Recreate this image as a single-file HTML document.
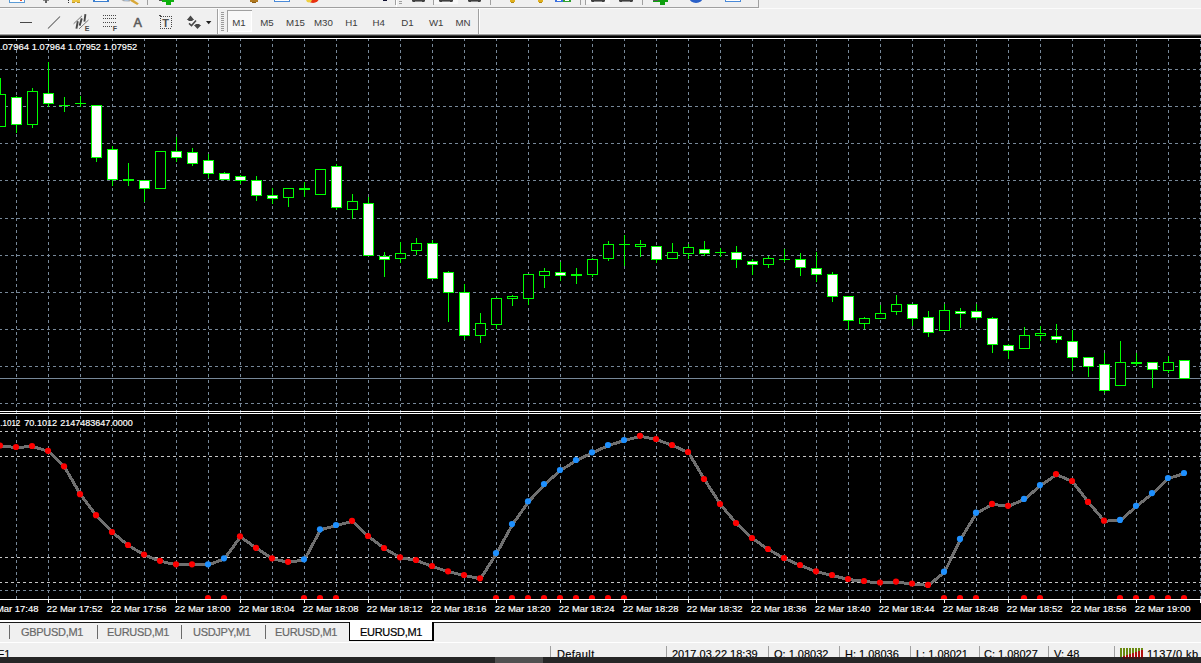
<!DOCTYPE html>
<html><head><meta charset="utf-8"><title>EURUSD,M1</title>
<style>
html,body{margin:0;padding:0;background:#f0f0f0;overflow:hidden}
body{width:1201px;height:663px;position:relative;font-family:"Liberation Sans",sans-serif}
.abs{position:absolute}
.tab{position:absolute;top:626px;font-size:11px;line-height:13px;color:#686868;letter-spacing:-0.3px;white-space:nowrap;-webkit-text-stroke:0.2px}
.sep{position:absolute;top:625px;width:1px;height:14px;background:#6a6a6a}
.st{position:absolute;top:648px;font-size:11px;line-height:13px;color:#000;letter-spacing:0px;white-space:nowrap;-webkit-text-stroke:0.15px}
.ss{position:absolute;top:646px;width:1px;height:11px;background:#a0a0a0}
</style></head><body>
<svg width="1201" height="36" viewBox="0 0 1201 36" style="position:absolute;left:0;top:0">
<defs><linearGradient id="tbg" x1="0" y1="0" x2="0" y2="1"><stop offset="0" stop-color="#e8e8e8"/><stop offset="0.5" stop-color="#8a8a8a"/><stop offset="1" stop-color="#000"/></linearGradient></defs>
<rect x="0" y="0" width="1201" height="36" fill="#f0f0f0"/>
<rect x="0" y="33" width="1201" height="1" fill="#f7f7f7"/><rect x="0" y="34" width="1201" height="1" fill="#a2a2a2"/><rect x="0" y="35" width="1201" height="1" fill="#3a3a3a"/>
<g shape-rendering="crispEdges">
<rect x="0" y="7" width="759" height="1" fill="#a0a0a0"/>
<rect x="0" y="8" width="1201" height="1" fill="#fbfbfb"/>
<rect x="758" y="0" width="1" height="8" fill="#a0a0a0"/>
<rect x="147" y="0" width="1" height="5" fill="#a0a0a0"/>
<rect x="395" y="0" width="1" height="5" fill="#a0a0a0"/>
<rect x="433" y="0" width="1" height="5" fill="#a0a0a0"/>
<rect x="490" y="0" width="1" height="5" fill="#a0a0a0"/>
<rect x="580" y="0" width="1" height="5" fill="#a0a0a0"/>
<rect x="642" y="0" width="1" height="5" fill="#a0a0a0"/>
<rect x="396" y="0" width="1" height="7" fill="#fff"/>
<rect x="399" y="1" width="3" height="1" fill="#a0a0a0"/><rect x="399" y="3" width="3" height="1" fill="#a0a0a0"/>
<rect x="434" y="0" width="24" height="4" fill="#f8f8f8"/>
<rect x="585" y="0" width="25" height="4" fill="#f8f8f8"/><rect x="585" y="0" width="1" height="5" fill="#a0a0a0"/>
<rect x="412" y="0" width="13" height="1" fill="#404040"/><rect x="412" y="1" width="13" height="1" fill="#8a8a8a"/>
<rect x="413" y="1" width="2" height="1" fill="#404040"/><rect x="422" y="1" width="2" height="1" fill="#404040"/>
<rect x="439" y="0" width="14" height="1" fill="#404040"/><rect x="439" y="1" width="14" height="1" fill="#8a8a8a"/>
<rect x="440" y="1" width="2" height="1" fill="#404040"/><rect x="450" y="1" width="2" height="1" fill="#404040"/>
<rect x="468" y="0" width="13" height="1" fill="#404040"/><rect x="468" y="1" width="13" height="1" fill="#8a8a8a"/>
<rect x="469" y="1" width="2" height="1" fill="#404040"/><rect x="478" y="1" width="2" height="1" fill="#404040"/>
<rect x="591" y="0" width="14" height="1" fill="#404040"/><rect x="591" y="1" width="14" height="1" fill="#8a8a8a"/>
<rect x="592" y="1" width="2" height="1" fill="#404040"/><rect x="602" y="1" width="2" height="1" fill="#404040"/>
<rect x="619" y="0" width="14" height="1" fill="#404040"/><rect x="619" y="1" width="14" height="1" fill="#8a8a8a"/>
<rect x="620" y="1" width="2" height="1" fill="#404040"/><rect x="630" y="1" width="2" height="1" fill="#404040"/>
<rect x="9" y="0" width="16" height="3" fill="#5b9bd5"/><rect x="10" y="0" width="14" height="2" fill="#fff"/><rect x="20" y="0" width="2" height="1" fill="#e8502a"/>
<rect x="43" y="0" width="6" height="1" fill="#8a8a8a"/><rect x="45" y="0" width="2" height="3" fill="#606060"/>
<rect x="68" y="0" width="1" height="1" fill="#303030"/><rect x="68" y="2" width="1" height="1" fill="#303030"/>
<rect x="72" y="0" width="8" height="2" fill="#ecc440"/><rect x="72" y="2" width="3" height="1" fill="#c09828"/><rect x="77" y="2" width="3" height="1" fill="#c09828"/>
<rect x="93" y="0" width="16" height="2" fill="#3b7fd0"/><rect x="95" y="0" width="12" height="1" fill="#fff"/>
<rect x="159" y="0" width="4" height="1" fill="#555"/><rect x="162" y="0" width="12" height="2" fill="#10b010"/><rect x="166" y="0" width="5" height="5" fill="#0cb00c"/>
<rect x="250" y="0" width="8" height="2" fill="#b07820"/><rect x="252" y="2" width="4" height="1" fill="#8a5a10"/>
<rect x="274" y="0" width="16" height="2" fill="#4a8ad8"/><rect x="275" y="0" width="14" height="1" fill="#fff"/>
<rect x="383" y="0" width="4" height="1" fill="#101030"/>
<rect x="510" y="0" width="5" height="2" fill="#e0b020"/><rect x="511" y="2" width="3" height="1" fill="#b08810"/>
<rect x="538" y="0" width="5" height="2" fill="#e0b020"/><rect x="539" y="2" width="3" height="1" fill="#b08810"/>
<rect x="555" y="0" width="8" height="2" fill="#3a70e0"/><rect x="557" y="0" width="4" height="1" fill="#fff"/>
<rect x="563" y="0" width="8" height="2" fill="#30a030"/><rect x="565" y="0" width="4" height="1" fill="#fff"/>
<rect x="653" y="0" width="15" height="2" fill="#10a010"/><rect x="660" y="0" width="5" height="5" fill="#10a010"/><rect x="653" y="0" width="5" height="1" fill="#555"/>
<rect x="725" y="0" width="16" height="2" fill="#4a8ad8"/><rect x="726" y="0" width="14" height="1" fill="#fff"/>
</g>
<path d="M121.5 0 L131 0 L129.5 1.4 L123.5 1.2 Z" fill="#a8a8a8"/><path d="M124 0 L129 0 L128 0.8 L125 0.8 Z" fill="#a8c8ee"/><path d="M130.2 0 L133.6 0 L138.8 3.4 L137.2 5 L130.8 1.2 Z" fill="#d8a838"/>
<ellipse cx="313" cy="-2" rx="6" ry="5" fill="#e83010"/><ellipse cx="309" cy="-1" rx="3" ry="3.5" fill="#f0d040"/>
<ellipse cx="696" cy="-3" rx="7" ry="6" fill="#2a60c8"/>
<g shape-rendering="crispEdges">
<rect x="20" y="22" width="12" height="1" fill="#484848"/>
<rect x="217" y="9" width="1" height="25" fill="#a0a0a0"/><rect x="218" y="9" width="1" height="25" fill="#fff"/>
<rect x="221" y="12" width="3" height="1" fill="#9a9a9a"/>
<rect x="221" y="14" width="3" height="1" fill="#9a9a9a"/>
<rect x="221" y="16" width="3" height="1" fill="#9a9a9a"/>
<rect x="221" y="18" width="3" height="1" fill="#9a9a9a"/>
<rect x="221" y="20" width="3" height="1" fill="#9a9a9a"/>
<rect x="221" y="22" width="3" height="1" fill="#9a9a9a"/>
<rect x="221" y="24" width="3" height="1" fill="#9a9a9a"/>
<rect x="221" y="26" width="3" height="1" fill="#9a9a9a"/>
<rect x="221" y="28" width="3" height="1" fill="#9a9a9a"/>
<rect x="221" y="30" width="3" height="1" fill="#9a9a9a"/>
<rect x="227" y="10" width="25" height="22" fill="#f8f8f8"/>
<rect x="227" y="10" width="25" height="1" fill="#a0a0a0"/><rect x="227" y="10" width="1" height="22" fill="#a0a0a0"/>
<rect x="228" y="31" width="24" height="1" fill="#fff"/><rect x="251" y="11" width="1" height="21" fill="#fff"/>
<rect x="478" y="9" width="1" height="25" fill="#a0a0a0"/><rect x="479" y="9" width="1" height="25" fill="#fff"/>
<rect x="103" y="15" width="1" height="1" fill="#484848"/>
<rect x="105" y="15" width="1" height="1" fill="#484848"/>
<rect x="107" y="15" width="1" height="1" fill="#484848"/>
<rect x="109" y="15" width="1" height="1" fill="#484848"/>
<rect x="111" y="15" width="1" height="1" fill="#484848"/>
<rect x="113" y="15" width="1" height="1" fill="#484848"/>
<rect x="115" y="15" width="1" height="1" fill="#484848"/>
<rect x="103" y="18" width="1" height="1" fill="#484848"/>
<rect x="105" y="18" width="1" height="1" fill="#484848"/>
<rect x="107" y="18" width="1" height="1" fill="#484848"/>
<rect x="109" y="18" width="1" height="1" fill="#484848"/>
<rect x="111" y="18" width="1" height="1" fill="#484848"/>
<rect x="113" y="18" width="1" height="1" fill="#484848"/>
<rect x="115" y="18" width="1" height="1" fill="#484848"/>
<rect x="103" y="22" width="1" height="1" fill="#484848"/>
<rect x="105" y="22" width="1" height="1" fill="#484848"/>
<rect x="107" y="22" width="1" height="1" fill="#484848"/>
<rect x="109" y="22" width="1" height="1" fill="#484848"/>
<rect x="111" y="22" width="1" height="1" fill="#484848"/>
<rect x="113" y="22" width="1" height="1" fill="#484848"/>
<rect x="115" y="22" width="1" height="1" fill="#484848"/>
<rect x="103" y="26" width="1" height="1" fill="#484848"/>
<rect x="105" y="26" width="1" height="1" fill="#484848"/>
<rect x="107" y="26" width="1" height="1" fill="#484848"/>
<rect x="109" y="26" width="1" height="1" fill="#484848"/>
<rect x="111" y="26" width="1" height="1" fill="#484848"/>
<rect x="163" y="16" width="1" height="1" fill="#484848"/>
<rect x="165" y="16" width="1" height="1" fill="#484848"/>
<rect x="167" y="16" width="1" height="1" fill="#484848"/>
<rect x="169" y="16" width="1" height="1" fill="#484848"/>
<rect x="171" y="16" width="1" height="1" fill="#484848"/>
<rect x="160" y="28" width="1" height="1" fill="#484848"/>
<rect x="162" y="28" width="1" height="1" fill="#484848"/>
<rect x="164" y="28" width="1" height="1" fill="#484848"/>
<rect x="166" y="28" width="1" height="1" fill="#484848"/>
<rect x="168" y="28" width="1" height="1" fill="#484848"/>
<rect x="170" y="28" width="1" height="1" fill="#484848"/>
<rect x="160" y="18" width="1" height="1" fill="#484848"/>
<rect x="160" y="20" width="1" height="1" fill="#484848"/>
<rect x="160" y="22" width="1" height="1" fill="#484848"/>
<rect x="160" y="24" width="1" height="1" fill="#484848"/>
<rect x="160" y="26" width="1" height="1" fill="#484848"/>
<rect x="160" y="28" width="1" height="1" fill="#484848"/>
<rect x="171" y="16" width="1" height="1" fill="#484848"/>
<rect x="171" y="18" width="1" height="1" fill="#484848"/>
<rect x="171" y="20" width="1" height="1" fill="#484848"/>
<rect x="171" y="22" width="1" height="1" fill="#484848"/>
<rect x="171" y="24" width="1" height="1" fill="#484848"/>
<rect x="171" y="26" width="1" height="1" fill="#484848"/>
<rect x="159" y="15" width="2" height="1" fill="#484848"/><rect x="160" y="16" width="2" height="1" fill="#484848"/>
</g>
<line x1="48" y1="28.5" x2="60" y2="16.5" stroke="#5c5c5c" stroke-width="1.05"/>
<g stroke="#6a6a6a" stroke-width="0.9" fill="none">
<line x1="73.6" y1="23.8" x2="82" y2="15.8"/><line x1="79" y1="28.9" x2="88.5" y2="20"/>
</g>
<g stroke="#484848" stroke-width="1.9" fill="none">
<line x1="76.4" y1="28.6" x2="77.8" y2="21.2"/><line x1="79.6" y1="25.6" x2="81.8" y2="18.4"/><line x1="84.4" y1="21.6" x2="85.4" y2="14.2"/>
</g>
<path d="M190.5 15.6 L194.2 20 L192.6 20 L192.6 21 L188.4 21 L188.4 20 L186.8 20 Z" fill="#484848"/>
<path d="M197.5 29.1 L201.2 25 L199.6 25 L199.6 24 L195.4 24 L195.4 25 L193.8 25 Z" fill="#484848"/>
<path d="M189 23.4 L191.5 25.6 L196 20.4" stroke="#484848" stroke-width="1.5" fill="none"/>
<path d="M206 21 L211.4 21 L208.7 24.3 Z" fill="#202020"/>
<g font-family="Liberation Sans, sans-serif">
<text x="84.8" y="31" font-size="7" font-weight="bold" fill="#484848">E</text>
<text x="112.8" y="31" font-size="7" font-weight="bold" fill="#484848">F</text>
<text x="133.4" y="27" font-size="12.6" fill="#5a5a5a" stroke="#5a5a5a" stroke-width="0.55">A</text>
<text x="162.2" y="27" font-size="11" font-weight="bold" fill="#505050">T</text>
<g font-size="9.7" fill="#3c3c3c" text-anchor="middle">
<text x="238.9" y="26">M1</text>
<text x="266.9" y="26">M5</text>
<text x="295.5" y="26">M15</text>
<text x="323.4" y="26">M30</text>
<text x="351.4" y="26">H1</text>
<text x="378.8" y="26">H4</text>
<text x="407.5" y="26">D1</text>
<text x="436.2" y="26">W1</text>
<text x="463" y="26">MN</text>
</g></g>
</svg>
<svg id="chart" width="1201" height="584" viewBox="0 36 1201 584" style="position:absolute;left:0;top:36px">
<rect x="0" y="36" width="1201" height="584" fill="#000"/>
<g shape-rendering="crispEdges">
<line x1="16.5" y1="38" x2="16.5" y2="599" stroke="#778899" stroke-width="1" stroke-dasharray="3 3"/>
<line x1="48.5" y1="38" x2="48.5" y2="599" stroke="#778899" stroke-width="1" stroke-dasharray="3 3"/>
<line x1="80.5" y1="38" x2="80.5" y2="599" stroke="#778899" stroke-width="1" stroke-dasharray="3 3"/>
<line x1="112.5" y1="38" x2="112.5" y2="599" stroke="#778899" stroke-width="1" stroke-dasharray="3 3"/>
<line x1="144.5" y1="38" x2="144.5" y2="599" stroke="#778899" stroke-width="1" stroke-dasharray="3 3"/>
<line x1="176.5" y1="38" x2="176.5" y2="599" stroke="#778899" stroke-width="1" stroke-dasharray="3 3"/>
<line x1="208.5" y1="38" x2="208.5" y2="599" stroke="#778899" stroke-width="1" stroke-dasharray="3 3"/>
<line x1="240.5" y1="38" x2="240.5" y2="599" stroke="#778899" stroke-width="1" stroke-dasharray="3 3"/>
<line x1="272.5" y1="38" x2="272.5" y2="599" stroke="#778899" stroke-width="1" stroke-dasharray="3 3"/>
<line x1="304.5" y1="38" x2="304.5" y2="599" stroke="#778899" stroke-width="1" stroke-dasharray="3 3"/>
<line x1="336.5" y1="38" x2="336.5" y2="599" stroke="#778899" stroke-width="1" stroke-dasharray="3 3"/>
<line x1="368.5" y1="38" x2="368.5" y2="599" stroke="#778899" stroke-width="1" stroke-dasharray="3 3"/>
<line x1="400.5" y1="38" x2="400.5" y2="599" stroke="#778899" stroke-width="1" stroke-dasharray="3 3"/>
<line x1="432.5" y1="38" x2="432.5" y2="599" stroke="#778899" stroke-width="1" stroke-dasharray="3 3"/>
<line x1="464.5" y1="38" x2="464.5" y2="599" stroke="#778899" stroke-width="1" stroke-dasharray="3 3"/>
<line x1="496.5" y1="38" x2="496.5" y2="599" stroke="#778899" stroke-width="1" stroke-dasharray="3 3"/>
<line x1="528.5" y1="38" x2="528.5" y2="599" stroke="#778899" stroke-width="1" stroke-dasharray="3 3"/>
<line x1="560.5" y1="38" x2="560.5" y2="599" stroke="#778899" stroke-width="1" stroke-dasharray="3 3"/>
<line x1="592.5" y1="38" x2="592.5" y2="599" stroke="#778899" stroke-width="1" stroke-dasharray="3 3"/>
<line x1="624.5" y1="38" x2="624.5" y2="599" stroke="#778899" stroke-width="1" stroke-dasharray="3 3"/>
<line x1="656.5" y1="38" x2="656.5" y2="599" stroke="#778899" stroke-width="1" stroke-dasharray="3 3"/>
<line x1="688.5" y1="38" x2="688.5" y2="599" stroke="#778899" stroke-width="1" stroke-dasharray="3 3"/>
<line x1="720.5" y1="38" x2="720.5" y2="599" stroke="#778899" stroke-width="1" stroke-dasharray="3 3"/>
<line x1="752.5" y1="38" x2="752.5" y2="599" stroke="#778899" stroke-width="1" stroke-dasharray="3 3"/>
<line x1="784.5" y1="38" x2="784.5" y2="599" stroke="#778899" stroke-width="1" stroke-dasharray="3 3"/>
<line x1="816.5" y1="38" x2="816.5" y2="599" stroke="#778899" stroke-width="1" stroke-dasharray="3 3"/>
<line x1="848.5" y1="38" x2="848.5" y2="599" stroke="#778899" stroke-width="1" stroke-dasharray="3 3"/>
<line x1="880.5" y1="38" x2="880.5" y2="599" stroke="#778899" stroke-width="1" stroke-dasharray="3 3"/>
<line x1="912.5" y1="38" x2="912.5" y2="599" stroke="#778899" stroke-width="1" stroke-dasharray="3 3"/>
<line x1="944.5" y1="38" x2="944.5" y2="599" stroke="#778899" stroke-width="1" stroke-dasharray="3 3"/>
<line x1="976.5" y1="38" x2="976.5" y2="599" stroke="#778899" stroke-width="1" stroke-dasharray="3 3"/>
<line x1="1008.5" y1="38" x2="1008.5" y2="599" stroke="#778899" stroke-width="1" stroke-dasharray="3 3"/>
<line x1="1040.5" y1="38" x2="1040.5" y2="599" stroke="#778899" stroke-width="1" stroke-dasharray="3 3"/>
<line x1="1072.5" y1="38" x2="1072.5" y2="599" stroke="#778899" stroke-width="1" stroke-dasharray="3 3"/>
<line x1="1104.5" y1="38" x2="1104.5" y2="599" stroke="#778899" stroke-width="1" stroke-dasharray="3 3"/>
<line x1="1136.5" y1="38" x2="1136.5" y2="599" stroke="#778899" stroke-width="1" stroke-dasharray="3 3"/>
<line x1="1168.5" y1="38" x2="1168.5" y2="599" stroke="#778899" stroke-width="1" stroke-dasharray="3 3"/>
<line x1="1200.5" y1="38" x2="1200.5" y2="599" stroke="#778899" stroke-width="1" stroke-dasharray="3 3"/>
<line x1="-1" y1="69.5" x2="1201" y2="69.5" stroke="#778899" stroke-width="1" stroke-dasharray="3 3"/>
<line x1="-1" y1="106.5" x2="1201" y2="106.5" stroke="#778899" stroke-width="1" stroke-dasharray="3 3"/>
<line x1="-1" y1="143.5" x2="1201" y2="143.5" stroke="#778899" stroke-width="1" stroke-dasharray="3 3"/>
<line x1="-1" y1="180.5" x2="1201" y2="180.5" stroke="#778899" stroke-width="1" stroke-dasharray="3 3"/>
<line x1="-1" y1="218.5" x2="1201" y2="218.5" stroke="#778899" stroke-width="1" stroke-dasharray="3 3"/>
<line x1="-1" y1="255.5" x2="1201" y2="255.5" stroke="#778899" stroke-width="1" stroke-dasharray="3 3"/>
<line x1="-1" y1="292.5" x2="1201" y2="292.5" stroke="#778899" stroke-width="1" stroke-dasharray="3 3"/>
<line x1="-1" y1="329.5" x2="1201" y2="329.5" stroke="#778899" stroke-width="1" stroke-dasharray="3 3"/>
<line x1="-1" y1="366.5" x2="1201" y2="366.5" stroke="#778899" stroke-width="1" stroke-dasharray="3 3"/>
<line x1="-1" y1="403.5" x2="1201" y2="403.5" stroke="#778899" stroke-width="1" stroke-dasharray="3 3"/>
<line x1="-1" y1="590.5" x2="1201" y2="590.5" stroke="#778899" stroke-width="1" stroke-dasharray="3 3"/>
<line x1="-1" y1="431.5" x2="1201" y2="431.5" stroke="#c6c6c6" stroke-width="1" stroke-dasharray="3 3"/>
<line x1="-1" y1="456.5" x2="1201" y2="456.5" stroke="#c6c6c6" stroke-width="1" stroke-dasharray="3 3"/>
<line x1="-1" y1="557.5" x2="1201" y2="557.5" stroke="#c6c6c6" stroke-width="1" stroke-dasharray="3 3"/>
<line x1="-1" y1="582.5" x2="1201" y2="582.5" stroke="#c6c6c6" stroke-width="1" stroke-dasharray="3 3"/>
<rect x="0" y="378" width="1201" height="1" fill="#778899"/>
<rect x="0" y="38" width="1201" height="1" fill="#fff"/>
<rect x="0" y="411" width="1201" height="1" fill="#fff"/>
<rect x="0" y="413" width="1201" height="1" fill="#fff"/>
<rect x="0" y="78" width="1" height="49" fill="#00ff00"/>
<rect x="-5" y="94" width="11" height="33" fill="#00ff00"/>
<rect x="-4" y="95" width="9" height="31" fill="#000"/>
<rect x="16" y="96" width="1" height="37" fill="#00ff00"/>
<rect x="11" y="97" width="11" height="28" fill="#00ff00"/>
<rect x="12" y="98" width="9" height="26" fill="#fff"/>
<rect x="32" y="88" width="1" height="40" fill="#00ff00"/>
<rect x="27" y="91" width="11" height="34" fill="#00ff00"/>
<rect x="28" y="92" width="9" height="32" fill="#000"/>
<rect x="48" y="62" width="1" height="45" fill="#00ff00"/>
<rect x="43" y="93" width="11" height="11" fill="#00ff00"/>
<rect x="44" y="94" width="9" height="9" fill="#fff"/>
<rect x="64" y="97" width="1" height="15" fill="#00ff00"/>
<rect x="59" y="105" width="11" height="1" fill="#00ff00"/>
<rect x="80" y="96" width="1" height="11" fill="#00ff00"/>
<rect x="75" y="103" width="11" height="1" fill="#00ff00"/>
<rect x="96" y="105" width="1" height="57" fill="#00ff00"/>
<rect x="91" y="105" width="11" height="53" fill="#00ff00"/>
<rect x="92" y="106" width="9" height="51" fill="#fff"/>
<rect x="112" y="146" width="1" height="40" fill="#00ff00"/>
<rect x="107" y="149" width="11" height="31" fill="#00ff00"/>
<rect x="108" y="150" width="9" height="29" fill="#fff"/>
<rect x="128" y="163" width="1" height="23" fill="#00ff00"/>
<rect x="123" y="179" width="11" height="2" fill="#00ff00"/>
<rect x="144" y="180" width="1" height="22" fill="#00ff00"/>
<rect x="139" y="180" width="11" height="9" fill="#00ff00"/>
<rect x="140" y="181" width="9" height="7" fill="#fff"/>
<rect x="160" y="151" width="1" height="38" fill="#00ff00"/>
<rect x="155" y="151" width="11" height="38" fill="#00ff00"/>
<rect x="156" y="152" width="9" height="36" fill="#000"/>
<rect x="176" y="137" width="1" height="25" fill="#00ff00"/>
<rect x="171" y="151" width="11" height="7" fill="#00ff00"/>
<rect x="172" y="152" width="9" height="5" fill="#fff"/>
<rect x="192" y="148" width="1" height="18" fill="#00ff00"/>
<rect x="187" y="152" width="11" height="12" fill="#00ff00"/>
<rect x="188" y="153" width="9" height="10" fill="#fff"/>
<rect x="208" y="154" width="1" height="24" fill="#00ff00"/>
<rect x="203" y="160" width="11" height="14" fill="#00ff00"/>
<rect x="204" y="161" width="9" height="12" fill="#fff"/>
<rect x="224" y="172" width="1" height="8" fill="#00ff00"/>
<rect x="219" y="173" width="11" height="7" fill="#00ff00"/>
<rect x="220" y="174" width="9" height="5" fill="#fff"/>
<rect x="240" y="175" width="1" height="9" fill="#00ff00"/>
<rect x="235" y="176" width="11" height="5" fill="#00ff00"/>
<rect x="236" y="177" width="9" height="3" fill="#fff"/>
<rect x="256" y="176" width="1" height="25" fill="#00ff00"/>
<rect x="251" y="180" width="11" height="16" fill="#00ff00"/>
<rect x="252" y="181" width="9" height="14" fill="#fff"/>
<rect x="272" y="188" width="1" height="16" fill="#00ff00"/>
<rect x="267" y="195" width="11" height="4" fill="#00ff00"/>
<rect x="268" y="196" width="9" height="2" fill="#fff"/>
<rect x="288" y="188" width="1" height="19" fill="#00ff00"/>
<rect x="283" y="188" width="11" height="10" fill="#00ff00"/>
<rect x="284" y="189" width="9" height="8" fill="#000"/>
<rect x="304" y="182" width="1" height="15" fill="#00ff00"/>
<rect x="299" y="188" width="11" height="2" fill="#00ff00"/>
<rect x="320" y="169" width="1" height="26" fill="#00ff00"/>
<rect x="315" y="169" width="11" height="26" fill="#00ff00"/>
<rect x="316" y="170" width="9" height="24" fill="#000"/>
<rect x="336" y="164" width="1" height="46" fill="#00ff00"/>
<rect x="331" y="166" width="11" height="42" fill="#00ff00"/>
<rect x="332" y="167" width="9" height="40" fill="#fff"/>
<rect x="352" y="194" width="1" height="25" fill="#00ff00"/>
<rect x="347" y="201" width="11" height="9" fill="#00ff00"/>
<rect x="348" y="202" width="9" height="7" fill="#000"/>
<rect x="368" y="197" width="1" height="59" fill="#00ff00"/>
<rect x="363" y="203" width="11" height="53" fill="#00ff00"/>
<rect x="364" y="204" width="9" height="51" fill="#fff"/>
<rect x="384" y="252" width="1" height="25" fill="#00ff00"/>
<rect x="379" y="256" width="11" height="4" fill="#00ff00"/>
<rect x="380" y="257" width="9" height="2" fill="#fff"/>
<rect x="400" y="242" width="1" height="21" fill="#00ff00"/>
<rect x="395" y="253" width="11" height="6" fill="#00ff00"/>
<rect x="396" y="254" width="9" height="4" fill="#000"/>
<rect x="416" y="238" width="1" height="17" fill="#00ff00"/>
<rect x="411" y="243" width="11" height="8" fill="#00ff00"/>
<rect x="412" y="244" width="9" height="6" fill="#000"/>
<rect x="432" y="240" width="1" height="39" fill="#00ff00"/>
<rect x="427" y="243" width="11" height="36" fill="#00ff00"/>
<rect x="428" y="244" width="9" height="34" fill="#fff"/>
<rect x="448" y="271" width="1" height="51" fill="#00ff00"/>
<rect x="443" y="272" width="11" height="21" fill="#00ff00"/>
<rect x="444" y="273" width="9" height="19" fill="#fff"/>
<rect x="464" y="284" width="1" height="56" fill="#00ff00"/>
<rect x="459" y="292" width="11" height="44" fill="#00ff00"/>
<rect x="460" y="293" width="9" height="42" fill="#fff"/>
<rect x="480" y="313" width="1" height="30" fill="#00ff00"/>
<rect x="475" y="323" width="11" height="13" fill="#00ff00"/>
<rect x="476" y="324" width="9" height="11" fill="#000"/>
<rect x="496" y="298" width="1" height="31" fill="#00ff00"/>
<rect x="491" y="298" width="11" height="27" fill="#00ff00"/>
<rect x="492" y="299" width="9" height="25" fill="#000"/>
<rect x="512" y="295" width="1" height="11" fill="#00ff00"/>
<rect x="507" y="296" width="11" height="3" fill="#00ff00"/>
<rect x="508" y="297" width="9" height="1" fill="#000"/>
<rect x="528" y="274" width="1" height="31" fill="#00ff00"/>
<rect x="523" y="274" width="11" height="25" fill="#00ff00"/>
<rect x="524" y="275" width="9" height="23" fill="#000"/>
<rect x="544" y="268" width="1" height="20" fill="#00ff00"/>
<rect x="539" y="271" width="11" height="5" fill="#00ff00"/>
<rect x="540" y="272" width="9" height="3" fill="#000"/>
<rect x="560" y="262" width="1" height="19" fill="#00ff00"/>
<rect x="555" y="272" width="11" height="4" fill="#00ff00"/>
<rect x="556" y="273" width="9" height="2" fill="#fff"/>
<rect x="576" y="268" width="1" height="16" fill="#00ff00"/>
<rect x="571" y="274" width="11" height="2" fill="#00ff00"/>
<rect x="592" y="258" width="1" height="19" fill="#00ff00"/>
<rect x="587" y="259" width="11" height="16" fill="#00ff00"/>
<rect x="588" y="260" width="9" height="14" fill="#000"/>
<rect x="608" y="241" width="1" height="20" fill="#00ff00"/>
<rect x="603" y="244" width="11" height="15" fill="#00ff00"/>
<rect x="604" y="245" width="9" height="13" fill="#000"/>
<rect x="624" y="235" width="1" height="31" fill="#00ff00"/>
<rect x="619" y="244" width="11" height="1" fill="#00ff00"/>
<rect x="640" y="240" width="1" height="17" fill="#00ff00"/>
<rect x="635" y="244" width="11" height="3" fill="#00ff00"/>
<rect x="636" y="245" width="9" height="1" fill="#000"/>
<rect x="656" y="246" width="1" height="17" fill="#00ff00"/>
<rect x="651" y="246" width="11" height="14" fill="#00ff00"/>
<rect x="652" y="247" width="9" height="12" fill="#fff"/>
<rect x="672" y="243" width="1" height="16" fill="#00ff00"/>
<rect x="667" y="252" width="11" height="7" fill="#00ff00"/>
<rect x="668" y="253" width="9" height="5" fill="#000"/>
<rect x="688" y="244" width="1" height="15" fill="#00ff00"/>
<rect x="683" y="247" width="11" height="7" fill="#00ff00"/>
<rect x="684" y="248" width="9" height="5" fill="#000"/>
<rect x="704" y="241" width="1" height="15" fill="#00ff00"/>
<rect x="699" y="249" width="11" height="5" fill="#00ff00"/>
<rect x="700" y="250" width="9" height="3" fill="#fff"/>
<rect x="720" y="248" width="1" height="9" fill="#00ff00"/>
<rect x="715" y="252" width="11" height="1" fill="#00ff00"/>
<rect x="736" y="246" width="1" height="22" fill="#00ff00"/>
<rect x="731" y="252" width="11" height="8" fill="#00ff00"/>
<rect x="732" y="253" width="9" height="6" fill="#fff"/>
<rect x="752" y="259" width="1" height="16" fill="#00ff00"/>
<rect x="747" y="261" width="11" height="4" fill="#00ff00"/>
<rect x="748" y="262" width="9" height="2" fill="#fff"/>
<rect x="768" y="256" width="1" height="12" fill="#00ff00"/>
<rect x="763" y="258" width="11" height="7" fill="#00ff00"/>
<rect x="764" y="259" width="9" height="5" fill="#000"/>
<rect x="784" y="249" width="1" height="13" fill="#00ff00"/>
<rect x="779" y="259" width="11" height="1" fill="#00ff00"/>
<rect x="800" y="253" width="1" height="23" fill="#00ff00"/>
<rect x="795" y="259" width="11" height="9" fill="#00ff00"/>
<rect x="796" y="260" width="9" height="7" fill="#fff"/>
<rect x="816" y="252" width="1" height="30" fill="#00ff00"/>
<rect x="811" y="268" width="11" height="7" fill="#00ff00"/>
<rect x="812" y="269" width="9" height="5" fill="#fff"/>
<rect x="832" y="272" width="1" height="30" fill="#00ff00"/>
<rect x="827" y="274" width="11" height="23" fill="#00ff00"/>
<rect x="828" y="275" width="9" height="21" fill="#fff"/>
<rect x="848" y="296" width="1" height="34" fill="#00ff00"/>
<rect x="843" y="296" width="11" height="25" fill="#00ff00"/>
<rect x="844" y="297" width="9" height="23" fill="#fff"/>
<rect x="864" y="317" width="1" height="12" fill="#00ff00"/>
<rect x="859" y="318" width="11" height="6" fill="#00ff00"/>
<rect x="860" y="319" width="9" height="4" fill="#000"/>
<rect x="880" y="305" width="1" height="14" fill="#00ff00"/>
<rect x="875" y="313" width="11" height="6" fill="#00ff00"/>
<rect x="876" y="314" width="9" height="4" fill="#000"/>
<rect x="896" y="295" width="1" height="20" fill="#00ff00"/>
<rect x="891" y="304" width="11" height="8" fill="#00ff00"/>
<rect x="892" y="305" width="9" height="6" fill="#000"/>
<rect x="912" y="304" width="1" height="22" fill="#00ff00"/>
<rect x="907" y="304" width="11" height="15" fill="#00ff00"/>
<rect x="908" y="305" width="9" height="13" fill="#fff"/>
<rect x="928" y="311" width="1" height="26" fill="#00ff00"/>
<rect x="923" y="317" width="11" height="16" fill="#00ff00"/>
<rect x="924" y="318" width="9" height="14" fill="#fff"/>
<rect x="944" y="304" width="1" height="27" fill="#00ff00"/>
<rect x="939" y="310" width="11" height="21" fill="#00ff00"/>
<rect x="940" y="311" width="9" height="19" fill="#000"/>
<rect x="960" y="308" width="1" height="20" fill="#00ff00"/>
<rect x="955" y="311" width="11" height="3" fill="#00ff00"/>
<rect x="956" y="312" width="9" height="1" fill="#fff"/>
<rect x="976" y="304" width="1" height="16" fill="#00ff00"/>
<rect x="971" y="311" width="11" height="7" fill="#00ff00"/>
<rect x="972" y="312" width="9" height="5" fill="#fff"/>
<rect x="992" y="317" width="1" height="36" fill="#00ff00"/>
<rect x="987" y="318" width="11" height="27" fill="#00ff00"/>
<rect x="988" y="319" width="9" height="25" fill="#fff"/>
<rect x="1008" y="344" width="1" height="15" fill="#00ff00"/>
<rect x="1003" y="345" width="11" height="6" fill="#00ff00"/>
<rect x="1004" y="346" width="9" height="4" fill="#fff"/>
<rect x="1024" y="327" width="1" height="22" fill="#00ff00"/>
<rect x="1019" y="335" width="11" height="14" fill="#00ff00"/>
<rect x="1020" y="336" width="9" height="12" fill="#000"/>
<rect x="1040" y="326" width="1" height="15" fill="#00ff00"/>
<rect x="1035" y="333" width="11" height="3" fill="#00ff00"/>
<rect x="1036" y="334" width="9" height="1" fill="#000"/>
<rect x="1056" y="324" width="1" height="19" fill="#00ff00"/>
<rect x="1051" y="336" width="11" height="4" fill="#00ff00"/>
<rect x="1052" y="337" width="9" height="2" fill="#fff"/>
<rect x="1072" y="330" width="1" height="41" fill="#00ff00"/>
<rect x="1067" y="341" width="11" height="17" fill="#00ff00"/>
<rect x="1068" y="342" width="9" height="15" fill="#fff"/>
<rect x="1088" y="357" width="1" height="20" fill="#00ff00"/>
<rect x="1083" y="357" width="11" height="10" fill="#00ff00"/>
<rect x="1084" y="358" width="9" height="8" fill="#fff"/>
<rect x="1104" y="353" width="1" height="40" fill="#00ff00"/>
<rect x="1099" y="364" width="11" height="27" fill="#00ff00"/>
<rect x="1100" y="365" width="9" height="25" fill="#fff"/>
<rect x="1120" y="341" width="1" height="45" fill="#00ff00"/>
<rect x="1115" y="362" width="11" height="24" fill="#00ff00"/>
<rect x="1116" y="363" width="9" height="22" fill="#000"/>
<rect x="1136" y="353" width="1" height="13" fill="#00ff00"/>
<rect x="1131" y="362" width="11" height="2" fill="#00ff00"/>
<rect x="1152" y="362" width="1" height="26" fill="#00ff00"/>
<rect x="1147" y="362" width="11" height="8" fill="#00ff00"/>
<rect x="1148" y="363" width="9" height="6" fill="#fff"/>
<rect x="1168" y="356" width="1" height="17" fill="#00ff00"/>
<rect x="1163" y="362" width="11" height="9" fill="#00ff00"/>
<rect x="1164" y="363" width="9" height="7" fill="#000"/>
<rect x="1184" y="360" width="1" height="19" fill="#00ff00"/>
<rect x="1179" y="360" width="11" height="19" fill="#00ff00"/>
<rect x="1180" y="361" width="9" height="17" fill="#fff"/>
</g>
<clipPath id="sub"><rect x="0" y="414" width="1201" height="185"/></clipPath>
<g clip-path="url(#sub)">
<polyline points="0,445.5 16,447 32,446 48,450.8 64,466.3 80,494.2 96,515.2 112,532 128,545 144,554.5 160,560.8 176,564.3 192,564.3 208,564.3 224,558.3 240,536.3 256,547.8 272,558.3 288,561.8 304,559.3 320,529.3 336,525 352,520.8 368,536 384,548 400,557.3 416,560 432,566 448,571.3 464,575 480,578.3 496,553 512,524 528,501.3 544,484 560,470 576,460 592,452.3 608,445 624,440 640,435.8 656,439 672,445 688,452 704,479 720,504 736,523 752,538 768,549 784,558 800,565 816,571.3 832,575 848,579 864,581 880,582.5 896,581.6 912,583.5 928,584.9 944,571.7 960,538.9 976,512.7 992,503.9 1008,505.8 1024,498.9 1040,485.1 1056,474.1 1072,481 1088,501.9 1104,520.7 1120,519.9 1136,505.8 1152,493.1 1168,478 1184,473" fill="none" stroke="#707070" stroke-width="3" stroke-linejoin="round" stroke-linecap="round" shape-rendering="crispEdges" transform="translate(0.5,0.5)"/>
<circle cx="0" cy="445.5" r="3.1" fill="#ff0000"/>
<circle cx="16" cy="447" r="3.1" fill="#ff0000"/>
<circle cx="32" cy="446" r="3.1" fill="#ff0000"/>
<circle cx="48" cy="450.8" r="3.1" fill="#ff0000"/>
<circle cx="64" cy="466.3" r="3.1" fill="#ff0000"/>
<circle cx="80" cy="494.2" r="3.1" fill="#ff0000"/>
<circle cx="96" cy="515.2" r="3.1" fill="#ff0000"/>
<circle cx="112" cy="532" r="3.1" fill="#ff0000"/>
<circle cx="128" cy="545" r="3.1" fill="#ff0000"/>
<circle cx="144" cy="554.5" r="3.1" fill="#ff0000"/>
<circle cx="160" cy="560.8" r="3.1" fill="#ff0000"/>
<circle cx="176" cy="564.3" r="3.1" fill="#ff0000"/>
<circle cx="192" cy="564.3" r="3.1" fill="#ff0000"/>
<circle cx="208" cy="564.3" r="3.1" fill="#1e90ff"/>
<circle cx="208" cy="598" r="3.1" fill="#ff0000"/>
<circle cx="224" cy="558.3" r="3.1" fill="#1e90ff"/>
<circle cx="224" cy="598" r="3.1" fill="#ff0000"/>
<circle cx="240" cy="536.3" r="3.1" fill="#ff0000"/>
<circle cx="256" cy="547.8" r="3.1" fill="#ff0000"/>
<circle cx="272" cy="558.3" r="3.1" fill="#ff0000"/>
<circle cx="288" cy="561.8" r="3.1" fill="#ff0000"/>
<circle cx="304" cy="559.3" r="3.1" fill="#1e90ff"/>
<circle cx="304" cy="598" r="3.1" fill="#ff0000"/>
<circle cx="320" cy="529.3" r="3.1" fill="#1e90ff"/>
<circle cx="320" cy="598" r="3.1" fill="#ff0000"/>
<circle cx="336" cy="525" r="3.1" fill="#1e90ff"/>
<circle cx="336" cy="598" r="3.1" fill="#ff0000"/>
<circle cx="352" cy="520.8" r="3.1" fill="#ff0000"/>
<circle cx="368" cy="536" r="3.1" fill="#ff0000"/>
<circle cx="384" cy="548" r="3.1" fill="#ff0000"/>
<circle cx="400" cy="557.3" r="3.1" fill="#ff0000"/>
<circle cx="416" cy="560" r="3.1" fill="#ff0000"/>
<circle cx="432" cy="566" r="3.1" fill="#ff0000"/>
<circle cx="448" cy="571.3" r="3.1" fill="#ff0000"/>
<circle cx="464" cy="575" r="3.1" fill="#ff0000"/>
<circle cx="480" cy="578.3" r="3.1" fill="#ff0000"/>
<circle cx="496" cy="553" r="3.1" fill="#1e90ff"/>
<circle cx="496" cy="598" r="3.1" fill="#ff0000"/>
<circle cx="512" cy="524" r="3.1" fill="#1e90ff"/>
<circle cx="512" cy="598" r="3.1" fill="#ff0000"/>
<circle cx="528" cy="501.3" r="3.1" fill="#1e90ff"/>
<circle cx="528" cy="598" r="3.1" fill="#ff0000"/>
<circle cx="544" cy="484" r="3.1" fill="#1e90ff"/>
<circle cx="544" cy="598" r="3.1" fill="#ff0000"/>
<circle cx="560" cy="470" r="3.1" fill="#1e90ff"/>
<circle cx="560" cy="598" r="3.1" fill="#ff0000"/>
<circle cx="576" cy="460" r="3.1" fill="#1e90ff"/>
<circle cx="576" cy="598" r="3.1" fill="#ff0000"/>
<circle cx="592" cy="452.3" r="3.1" fill="#1e90ff"/>
<circle cx="592" cy="598" r="3.1" fill="#ff0000"/>
<circle cx="608" cy="445" r="3.1" fill="#1e90ff"/>
<circle cx="608" cy="598" r="3.1" fill="#ff0000"/>
<circle cx="624" cy="440" r="3.1" fill="#1e90ff"/>
<circle cx="624" cy="598" r="3.1" fill="#ff0000"/>
<circle cx="640" cy="435.8" r="3.1" fill="#ff0000"/>
<circle cx="656" cy="439" r="3.1" fill="#ff0000"/>
<circle cx="672" cy="445" r="3.1" fill="#ff0000"/>
<circle cx="688" cy="452" r="3.1" fill="#ff0000"/>
<circle cx="704" cy="479" r="3.1" fill="#ff0000"/>
<circle cx="720" cy="504" r="3.1" fill="#ff0000"/>
<circle cx="736" cy="523" r="3.1" fill="#ff0000"/>
<circle cx="752" cy="538" r="3.1" fill="#ff0000"/>
<circle cx="768" cy="549" r="3.1" fill="#ff0000"/>
<circle cx="784" cy="558" r="3.1" fill="#ff0000"/>
<circle cx="800" cy="565" r="3.1" fill="#ff0000"/>
<circle cx="816" cy="571.3" r="3.1" fill="#ff0000"/>
<circle cx="832" cy="575" r="3.1" fill="#ff0000"/>
<circle cx="848" cy="579" r="3.1" fill="#ff0000"/>
<circle cx="864" cy="581" r="3.1" fill="#ff0000"/>
<circle cx="880" cy="582.5" r="3.1" fill="#ff0000"/>
<circle cx="896" cy="581.6" r="3.1" fill="#ff0000"/>
<circle cx="912" cy="583.5" r="3.1" fill="#ff0000"/>
<circle cx="928" cy="584.9" r="3.1" fill="#ff0000"/>
<circle cx="944" cy="571.7" r="3.1" fill="#1e90ff"/>
<circle cx="944" cy="598" r="3.1" fill="#ff0000"/>
<circle cx="960" cy="538.9" r="3.1" fill="#1e90ff"/>
<circle cx="960" cy="598" r="3.1" fill="#ff0000"/>
<circle cx="976" cy="512.7" r="3.1" fill="#1e90ff"/>
<circle cx="976" cy="598" r="3.1" fill="#ff0000"/>
<circle cx="992" cy="503.9" r="3.1" fill="#ff0000"/>
<circle cx="1008" cy="505.8" r="3.1" fill="#ff0000"/>
<circle cx="1024" cy="498.9" r="3.1" fill="#1e90ff"/>
<circle cx="1024" cy="598" r="3.1" fill="#ff0000"/>
<circle cx="1040" cy="485.1" r="3.1" fill="#1e90ff"/>
<circle cx="1040" cy="598" r="3.1" fill="#ff0000"/>
<circle cx="1056" cy="474.1" r="3.1" fill="#ff0000"/>
<circle cx="1072" cy="481" r="3.1" fill="#ff0000"/>
<circle cx="1088" cy="501.9" r="3.1" fill="#ff0000"/>
<circle cx="1104" cy="520.7" r="3.1" fill="#ff0000"/>
<circle cx="1120" cy="519.9" r="3.1" fill="#1e90ff"/>
<circle cx="1120" cy="598" r="3.1" fill="#ff0000"/>
<circle cx="1136" cy="505.8" r="3.1" fill="#1e90ff"/>
<circle cx="1136" cy="598" r="3.1" fill="#ff0000"/>
<circle cx="1152" cy="493.1" r="3.1" fill="#1e90ff"/>
<circle cx="1152" cy="598" r="3.1" fill="#ff0000"/>
<circle cx="1168" cy="478" r="3.1" fill="#1e90ff"/>
<circle cx="1168" cy="598" r="3.1" fill="#ff0000"/>
<circle cx="1184" cy="473" r="3.1" fill="#1e90ff"/>
<circle cx="1184" cy="598" r="3.1" fill="#ff0000"/>
</g>
<g shape-rendering="crispEdges">
<rect x="0" y="599" width="1201" height="1" fill="#fff"/>
<rect x="48" y="599" width="1" height="4" fill="#fff"/>
<rect x="112" y="599" width="1" height="4" fill="#fff"/>
<rect x="176" y="599" width="1" height="4" fill="#fff"/>
<rect x="240" y="599" width="1" height="4" fill="#fff"/>
<rect x="304" y="599" width="1" height="4" fill="#fff"/>
<rect x="368" y="599" width="1" height="4" fill="#fff"/>
<rect x="432" y="599" width="1" height="4" fill="#fff"/>
<rect x="496" y="599" width="1" height="4" fill="#fff"/>
<rect x="560" y="599" width="1" height="4" fill="#fff"/>
<rect x="624" y="599" width="1" height="4" fill="#fff"/>
<rect x="688" y="599" width="1" height="4" fill="#fff"/>
<rect x="752" y="599" width="1" height="4" fill="#fff"/>
<rect x="816" y="599" width="1" height="4" fill="#fff"/>
<rect x="880" y="599" width="1" height="4" fill="#fff"/>
<rect x="944" y="599" width="1" height="4" fill="#fff"/>
<rect x="1008" y="599" width="1" height="4" fill="#fff"/>
<rect x="1072" y="599" width="1" height="4" fill="#fff"/>
<rect x="1136" y="599" width="1" height="4" fill="#fff"/>
<rect x="1200" y="599" width="1" height="4" fill="#fff"/>
</g>
<g font-family="Liberation Sans, sans-serif" font-size="9.8" fill="#fff" stroke="#fff" stroke-width="0.18">
<text x="-0.10" y="50" textLength="29.15" lengthAdjust="spacingAndGlyphs">.07964</text>
<text x="31.85" y="50" textLength="33.45" lengthAdjust="spacingAndGlyphs">1.07964</text>
<text x="68.10" y="50" textLength="32.80" lengthAdjust="spacingAndGlyphs">1.07952</text>
<text x="103.85" y="50" textLength="33.35" lengthAdjust="spacingAndGlyphs">1.07952</text>
<text x="0.30" y="426" textLength="20.00" lengthAdjust="spacingAndGlyphs">.1012</text>
<text x="24.20" y="426" textLength="33.00" lengthAdjust="spacingAndGlyphs">70.1012</text>
<text x="60.20" y="426" textLength="72.60" lengthAdjust="spacingAndGlyphs">2147483647.0000</text>
<text x="-17.20" y="612" textLength="55.6" lengthAdjust="spacingAndGlyphs">22 Mar 17:48</text>
<text x="46.80" y="612" textLength="55.6" lengthAdjust="spacingAndGlyphs">22 Mar 17:52</text>
<text x="110.80" y="612" textLength="55.6" lengthAdjust="spacingAndGlyphs">22 Mar 17:56</text>
<text x="174.80" y="612" textLength="55.6" lengthAdjust="spacingAndGlyphs">22 Mar 18:00</text>
<text x="238.80" y="612" textLength="55.6" lengthAdjust="spacingAndGlyphs">22 Mar 18:04</text>
<text x="302.80" y="612" textLength="55.6" lengthAdjust="spacingAndGlyphs">22 Mar 18:08</text>
<text x="366.80" y="612" textLength="55.6" lengthAdjust="spacingAndGlyphs">22 Mar 18:12</text>
<text x="430.80" y="612" textLength="55.6" lengthAdjust="spacingAndGlyphs">22 Mar 18:16</text>
<text x="494.80" y="612" textLength="55.6" lengthAdjust="spacingAndGlyphs">22 Mar 18:20</text>
<text x="558.80" y="612" textLength="55.6" lengthAdjust="spacingAndGlyphs">22 Mar 18:24</text>
<text x="622.80" y="612" textLength="55.6" lengthAdjust="spacingAndGlyphs">22 Mar 18:28</text>
<text x="686.80" y="612" textLength="55.6" lengthAdjust="spacingAndGlyphs">22 Mar 18:32</text>
<text x="750.80" y="612" textLength="55.6" lengthAdjust="spacingAndGlyphs">22 Mar 18:36</text>
<text x="814.80" y="612" textLength="55.6" lengthAdjust="spacingAndGlyphs">22 Mar 18:40</text>
<text x="878.80" y="612" textLength="55.6" lengthAdjust="spacingAndGlyphs">22 Mar 18:44</text>
<text x="942.80" y="612" textLength="55.6" lengthAdjust="spacingAndGlyphs">22 Mar 18:48</text>
<text x="1006.80" y="612" textLength="55.6" lengthAdjust="spacingAndGlyphs">22 Mar 18:52</text>
<text x="1070.80" y="612" textLength="55.6" lengthAdjust="spacingAndGlyphs">22 Mar 18:56</text>
<text x="1134.80" y="612" textLength="55.6" lengthAdjust="spacingAndGlyphs">22 Mar 19:00</text>
</g>
</svg>
<div class="abs" style="left:0;top:620px;width:1201px;height:2px;background:#fff"></div>
<div class="abs" style="left:0;top:622px;width:1201px;height:1px;background:#1a1a1a"></div>
<div class="abs" style="left:0;top:623px;width:1201px;height:19px;background:#f0f0f0"></div>
<div class="abs" style="left:0;top:642px;width:1201px;height:1px;background:#fff"></div>
<div class="abs" style="left:0;top:643px;width:1201px;height:14px;background:#f0f0f0"></div>
<div class="sep" style="left:9px"></div><div class="sep" style="left:97px"></div><div class="sep" style="left:181px"></div><div class="sep" style="left:265px"></div>
<div class="tab" style="left:21px">GBPUSD,M1</div>
<div class="tab" style="left:107px">EURUSD,M1</div>
<div class="tab" style="left:193px">USDJPY,M1</div>
<div class="tab" style="left:275px">EURUSD,M1</div>
<div class="abs" style="left:349px;top:622px;width:85px;height:19px;background:#000"></div>
<div class="abs" style="left:350px;top:620px;width:82px;height:20px;background:#fff"></div>
<div class="tab" style="left:360px;color:#000">EURUSD,M1</div>
<div class="st" style="left:-2.5px">F1</div>
<div class="ss" style="left:550px"></div><div class="ss" style="left:666px"></div><div class="ss" style="left:768px"></div><div class="ss" style="left:839px"></div><div class="ss" style="left:910px"></div><div class="ss" style="left:979px"></div><div class="ss" style="left:1048px"></div><div class="ss" style="left:1114px"></div>
<div class="st" style="left:557px;letter-spacing:0.4px">Default</div>
<div class="st" style="left:672px">2017.03.22 18:39</div>
<div class="st" style="left:774px">O: 1.08032</div>
<div class="st" style="left:845px">H: 1.08036</div>
<div class="st" style="left:916px">L: 1.08021</div>
<div class="st" style="left:984px">C: 1.08027</div>
<div class="st" style="left:1054px">V: 48</div>
<div class="st" style="left:1147px;letter-spacing:0.45px">1137/0 kb</div>
<svg class="abs" style="left:1119px;top:648px" width="26" height="10" viewBox="0 0 26 10" shape-rendering="crispEdges">
<g fill="#6a8a10"><rect x="1" y="0" width="2" height="9"/><rect x="4" y="0" width="2" height="8"/><rect x="7" y="0" width="2" height="7"/><rect x="10" y="0" width="2" height="6"/><rect x="13" y="0" width="2" height="5"/><rect x="16" y="0" width="2" height="4"/><rect x="19" y="0" width="2" height="3"/><rect x="22" y="0" width="2" height="2"/></g>
<g fill="#b01010"><rect x="4" y="8" width="2" height="2"/><rect x="7" y="7" width="2" height="3"/><rect x="10" y="6" width="2" height="4"/><rect x="13" y="5" width="2" height="5"/><rect x="16" y="4" width="2" height="6"/><rect x="19" y="3" width="2" height="7"/><rect x="22" y="2" width="2" height="8"/></g>
</svg>
<div class="abs" style="left:0;top:657px;width:1201px;height:6px;background:#262626"></div>
<div class="abs" style="left:495px;top:657px;width:48px;height:6px;background:#505050"></div>
<svg class="abs" style="left:1119px;top:657px" width="26" height="3" viewBox="0 0 26 3" shape-rendering="crispEdges"><g fill="#4a1010"><rect x="4" y="0" width="2" height="2"/><rect x="7" y="0" width="2" height="2"/><rect x="10" y="0" width="2" height="2"/><rect x="13" y="0" width="2" height="2"/><rect x="16" y="0" width="2" height="2"/><rect x="19" y="0" width="2" height="2"/><rect x="22" y="0" width="2" height="2"/></g></svg>
</body></html>
